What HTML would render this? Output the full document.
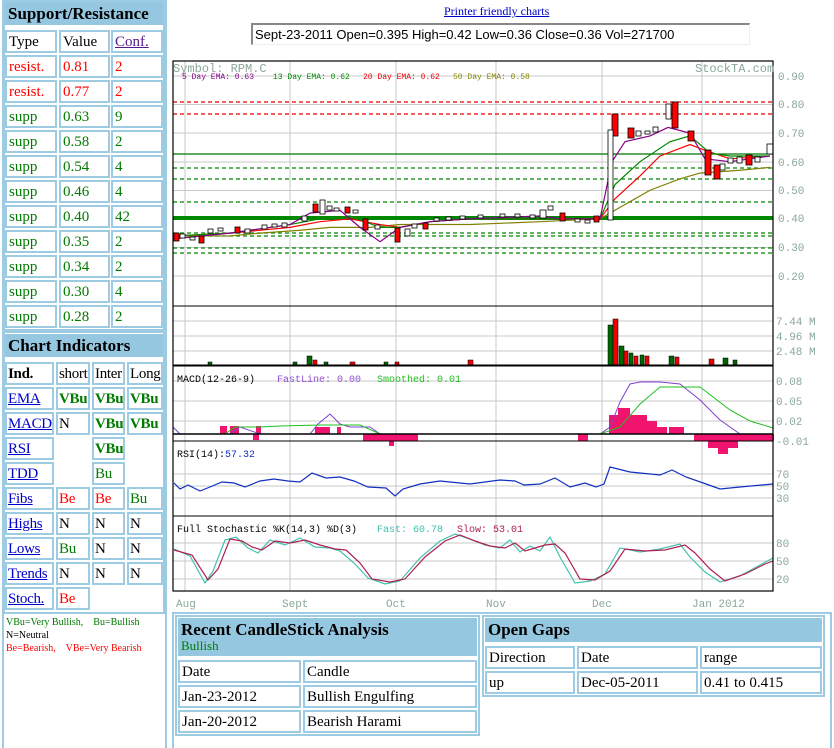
<!DOCTYPE html>
<html><head><meta charset="utf-8"><style>
*{margin:0;padding:0;box-sizing:border-box}
body{width:834px;height:748px;background:#fff;position:relative;overflow:hidden;font-family:"Liberation Serif",serif;font-size:15px;color:#000}
.a{position:absolute}
.c{position:absolute;border:2px solid #9ccbe2;padding:2px 2px;line-height:17px;white-space:nowrap;overflow:hidden}
.n{padding:2px 0 2px 1px;letter-spacing:-0.3px}
.h{position:absolute;background:#96c7e1;font-weight:bold;font-size:17px;padding:2px 3px;line-height:20px}
.r{color:#f00}.g{color:#007a00}.u{color:#00c;text-decoration:underline}.b{font-weight:bold}
.lk{color:#551a8b;text-decoration:underline}
</style></head><body>
<div class="a" style="left:2px;top:0;width:165px;height:748px;border:2px solid #9ccbe2;border-bottom:none"></div>
<div class="a" style="left:3px;top:0;width:162px;height:331px;border:2px solid #9ccbe2"></div>
<div class="h" style="left:5px;top:2px;width:158px;height:23px">Support/Resistance</div>
<div class="c" style="left:5px;top:30px;width:52px;height:23px">Type</div><div class="c" style="left:59px;top:30px;width:51px;height:23px">Value</div><div class="c lk" style="left:111px;top:30px;width:52px;height:23px">Conf.</div>
<div class="c r" style="left:5px;top:55px;width:52px;height:23px">resist.</div><div class="c r" style="left:59px;top:55px;width:51px;height:23px">0.81</div><div class="c r" style="left:111px;top:55px;width:52px;height:23px">2</div>
<div class="c r" style="left:5px;top:80px;width:52px;height:23px">resist.</div><div class="c r" style="left:59px;top:80px;width:51px;height:23px">0.77</div><div class="c r" style="left:111px;top:80px;width:52px;height:23px">2</div>
<div class="c g" style="left:5px;top:105px;width:52px;height:23px">supp</div><div class="c g" style="left:59px;top:105px;width:51px;height:23px">0.63</div><div class="c g" style="left:111px;top:105px;width:52px;height:23px">9</div>
<div class="c g" style="left:5px;top:130px;width:52px;height:23px">supp</div><div class="c g" style="left:59px;top:130px;width:51px;height:23px">0.58</div><div class="c g" style="left:111px;top:130px;width:52px;height:23px">2</div>
<div class="c g" style="left:5px;top:155px;width:52px;height:23px">supp</div><div class="c g" style="left:59px;top:155px;width:51px;height:23px">0.54</div><div class="c g" style="left:111px;top:155px;width:52px;height:23px">4</div>
<div class="c g" style="left:5px;top:180px;width:52px;height:23px">supp</div><div class="c g" style="left:59px;top:180px;width:51px;height:23px">0.46</div><div class="c g" style="left:111px;top:180px;width:52px;height:23px">4</div>
<div class="c g" style="left:5px;top:205px;width:52px;height:23px">supp</div><div class="c g" style="left:59px;top:205px;width:51px;height:23px">0.40</div><div class="c g" style="left:111px;top:205px;width:52px;height:23px">42</div>
<div class="c g" style="left:5px;top:230px;width:52px;height:23px">supp</div><div class="c g" style="left:59px;top:230px;width:51px;height:23px">0.35</div><div class="c g" style="left:111px;top:230px;width:52px;height:23px">2</div>
<div class="c g" style="left:5px;top:255px;width:52px;height:23px">supp</div><div class="c g" style="left:59px;top:255px;width:51px;height:23px">0.34</div><div class="c g" style="left:111px;top:255px;width:52px;height:23px">2</div>
<div class="c g" style="left:5px;top:280px;width:52px;height:23px">supp</div><div class="c g" style="left:59px;top:280px;width:51px;height:23px">0.30</div><div class="c g" style="left:111px;top:280px;width:52px;height:23px">4</div>
<div class="c g" style="left:5px;top:305px;width:52px;height:23px">supp</div><div class="c g" style="left:59px;top:305px;width:51px;height:23px">0.28</div><div class="c g" style="left:111px;top:305px;width:52px;height:23px">2</div>

<div class="a" style="left:3px;top:331px;width:162px;height:283px;border:2px solid #9ccbe2"></div>
<div class="h" style="left:5px;top:334px;width:158px;height:23px">Chart Indicators</div>
<div class="c b n" style="left:5px;top:362px;width:49px;height:23px">Ind.</div><div class="c n" style="left:56px;top:362px;width:34px;height:23px">short</div><div class="c n" style="left:92px;top:362px;width:33px;height:23px">Inter</div><div class="c n" style="left:127px;top:362px;width:36px;height:23px">Long</div>
<div class="c u n" style="left:5px;top:387px;width:49px;height:23px">EMA</div><div class="c g b n" style="left:56px;top:387px;width:34px;height:23px">VBu</div><div class="c g b n" style="left:92px;top:387px;width:33px;height:23px">VBu</div><div class="c g b n" style="left:127px;top:387px;width:36px;height:23px">VBu</div>
<div class="c u n" style="left:5px;top:412px;width:49px;height:23px">MACD</div><div class="c n" style="left:56px;top:412px;width:34px;height:23px">N</div><div class="c g b n" style="left:92px;top:412px;width:33px;height:23px">VBu</div><div class="c g b n" style="left:127px;top:412px;width:36px;height:23px">VBu</div>
<div class="c u n" style="left:5px;top:437px;width:49px;height:23px">RSI</div><div class="c g b n" style="left:92px;top:437px;width:33px;height:23px">VBu</div>
<div class="c u n" style="left:5px;top:462px;width:49px;height:23px">TDD</div><div class="c g n" style="left:92px;top:462px;width:33px;height:23px">Bu</div>
<div class="c u n" style="left:5px;top:487px;width:49px;height:23px">Fibs</div><div class="c r n" style="left:56px;top:487px;width:34px;height:23px">Be</div><div class="c r n" style="left:92px;top:487px;width:33px;height:23px">Be</div><div class="c g n" style="left:127px;top:487px;width:36px;height:23px">Bu</div>
<div class="c u n" style="left:5px;top:512px;width:49px;height:23px">Highs</div><div class="c n" style="left:56px;top:512px;width:34px;height:23px">N</div><div class="c n" style="left:92px;top:512px;width:33px;height:23px">N</div><div class="c n" style="left:127px;top:512px;width:36px;height:23px">N</div>
<div class="c u n" style="left:5px;top:537px;width:49px;height:23px">Lows</div><div class="c g n" style="left:56px;top:537px;width:34px;height:23px">Bu</div><div class="c n" style="left:92px;top:537px;width:33px;height:23px">N</div><div class="c n" style="left:127px;top:537px;width:36px;height:23px">N</div>
<div class="c u n" style="left:5px;top:562px;width:49px;height:23px">Trends</div><div class="c n" style="left:56px;top:562px;width:34px;height:23px">N</div><div class="c n" style="left:92px;top:562px;width:33px;height:23px">N</div><div class="c n" style="left:127px;top:562px;width:36px;height:23px">N</div>
<div class="c u n" style="left:5px;top:587px;width:49px;height:23px">Stoch.</div><div class="c r n" style="left:56px;top:587px;width:34px;height:23px">Be</div>
<div class="a" style="left:6px;top:616px;font-size:10px;line-height:13px;white-space:nowrap"><span class="g">VBu=Very Bullish, &nbsp;&nbsp; Bu=Bullish</span><br>N=Neutral<br><span class="r">Be=Bearish, &nbsp;&nbsp; VBe=Very Bearish</span></div>

<div class="a" style="left:444px;top:4px;font-size:12px;color:#00c;text-decoration:underline">Printer friendly charts</div>
<div class="a" style="left:251px;top:23px;width:499px;height:22px;border-top:2px solid #888;border-left:2px solid #888;border-right:1px solid #eee;border-bottom:1px solid #eee;font-family:'Liberation Sans',sans-serif;font-size:13px;line-height:19px;padding-left:2px">Sept-23-2011 Open=0.395 High=0.42 Low=0.36 Close=0.36 Vol=271700</div>

<svg class="a" style="left:0;top:0" width="834" height="748" font-family="'Liberation Mono',monospace">
<g stroke="#c8c8c8" stroke-width="1">
<line x1="185" y1="61" x2="185" y2="591"/><line x1="290" y1="61" x2="290" y2="591"/><line x1="396" y1="61" x2="396" y2="591"/><line x1="496" y1="61" x2="496" y2="591"/><line x1="602" y1="61" x2="602" y2="591"/><line x1="702" y1="61" x2="702" y2="591"/>
<line x1="173" y1="76" x2="773" y2="76"/><line x1="173" y1="104.5" x2="773" y2="104.5"/><line x1="173" y1="133" x2="773" y2="133"/><line x1="173" y1="162" x2="773" y2="162"/><line x1="173" y1="190.5" x2="773" y2="190.5"/><line x1="173" y1="219" x2="773" y2="219"/><line x1="173" y1="247.5" x2="773" y2="247.5"/><line x1="173" y1="276" x2="773" y2="276"/>
<line x1="173" y1="321" x2="773" y2="321"/><line x1="173" y1="336" x2="773" y2="336"/><line x1="173" y1="351" x2="773" y2="351"/>
<line x1="173" y1="381" x2="773" y2="381"/><line x1="173" y1="401" x2="773" y2="401"/><line x1="173" y1="421" x2="773" y2="421"/>
<line x1="173" y1="474" x2="773" y2="474"/><line x1="173" y1="486" x2="773" y2="486"/><line x1="173" y1="498" x2="773" y2="498"/>
<line x1="173" y1="543" x2="773" y2="543"/><line x1="173" y1="561" x2="773" y2="561"/><line x1="173" y1="579" x2="773" y2="579"/>
</g>
<g stroke-width="1.2" stroke-dasharray="4,3">
<line x1="173" y1="102" x2="773" y2="102" stroke="#e00"/><line x1="173" y1="114" x2="773" y2="114" stroke="#e00"/>
<line x1="173" y1="168" x2="773" y2="168" stroke="#080"/><line x1="173" y1="179" x2="773" y2="179" stroke="#080"/><line x1="173" y1="202" x2="773" y2="202" stroke="#080"/>
<line x1="173" y1="233" x2="773" y2="233" stroke="#080"/><line x1="173" y1="236" x2="773" y2="236" stroke="#080"/><line x1="173" y1="248" x2="773" y2="248" stroke="#080"/><line x1="173" y1="253" x2="773" y2="253" stroke="#080"/>
</g>
<line x1="173" y1="154" x2="773" y2="154" stroke="#070" stroke-width="1.3"/>
<line x1="173" y1="218" x2="773" y2="218" stroke="#080" stroke-width="4"/>
<g transform="matrix(1 0 0 -285.7 0 333.1)" fill="none">
<polyline vector-effect="non-scaling-stroke" stroke="#808000" stroke-width="1.2" points="174,.34 230,.34 260,.35 300,.36 330,.37 370,.37 400,.38 470,.38 540,.39 600,.40 625,.45 650,.50 680,.54 700,.56 740,.57 770,.58"/>
<polyline vector-effect="non-scaling-stroke" stroke="#f00" stroke-width="1.2" points="174,.34 230,.35 290,.37 320,.39 350,.40 380,.38 400,.37 430,.39 470,.40 540,.40 600,.40 615,.47 640,.55 660,.62 690,.66 705,.64 730,.61 770,.62"/>
<polyline vector-effect="non-scaling-stroke" stroke="#080" stroke-width="1.2" points="174,.34 230,.35 290,.38 320,.40 350,.41 380,.37 400,.37 430,.39 470,.40 540,.40 600,.40 615,.52 640,.60 670,.67 690,.69 710,.63 730,.62 770,.62"/>
<polyline vector-effect="non-scaling-stroke" stroke="#808" stroke-width="1.2" points="174,.33 230,.35 290,.38 310,.42 340,.43 360,.37 380,.32 400,.37 430,.39 470,.40 540,.41 560,.40 600,.40 612,.60 625,.67 650,.69 668,.72 690,.70 705,.61 730,.60 770,.62"/>
</g>
<g fill="#fff" stroke="#000" stroke-width="0.8">
<rect x="180" y="234" width="5" height="4"/><rect x="190" y="237" width="5" height="3"/><rect x="208" y="229" width="5" height="4"/><rect x="218" y="228" width="5" height="3"/><rect x="245" y="229" width="5" height="4"/><rect x="262" y="225" width="5" height="4"/><rect x="272" y="224" width="5" height="3"/><rect x="282" y="223" width="5" height="4"/>
<rect x="302" y="216" width="5" height="5"/><rect x="327" y="206" width="5" height="4"/><rect x="334" y="208" width="5" height="3"/><rect x="353" y="210" width="5" height="3"/><rect x="375" y="225" width="5" height="4"/><rect x="405" y="229" width="5" height="7"/><rect x="412" y="224" width="5" height="4"/>
<rect x="434" y="218" width="5" height="3"/><rect x="446" y="217" width="5" height="3"/><rect x="460" y="216" width="5" height="3"/><rect x="478" y="215" width="5" height="3"/><rect x="500" y="214" width="5" height="3"/><rect x="515" y="214" width="5" height="3"/><rect x="530" y="215" width="5" height="3"/><rect x="548" y="206" width="5" height="4"/><rect x="575" y="219" width="5" height="3"/><rect x="585" y="220" width="5" height="3"/>
<rect x="636" y="131" width="5" height="5"/><rect x="645" y="131" width="5" height="3"/><rect x="653" y="127" width="5" height="5"/><rect x="720" y="164" width="5" height="6"/><rect x="728" y="158" width="5" height="5"/><rect x="737" y="157" width="5" height="6"/><rect x="755" y="157" width="5" height="5"/>
</g>
<g fill="#f00" stroke="#000" stroke-width="0.8">
<rect x="174" y="233" width="5" height="8"/><rect x="199" y="236" width="5" height="7"/><rect x="235" y="227" width="5" height="6"/><rect x="313" y="204" width="5" height="8"/><rect x="345" y="207" width="5" height="6"/>
<rect x="363" y="219" width="5" height="11"/><rect x="395" y="228" width="5" height="14"/><rect x="423" y="223" width="5" height="6"/><rect x="560" y="213" width="5" height="8"/><rect x="594" y="216" width="5" height="6"/>
<rect x="612" y="114" width="6" height="22"/><rect x="628" y="128" width="6" height="10"/><rect x="672" y="102" width="6" height="26"/><rect x="688" y="131" width="6" height="10"/><rect x="705" y="150" width="6" height="25"/><rect x="714" y="165" width="6" height="14"/><rect x="746" y="155" width="6" height="10"/>
</g>
<g fill="#fff" stroke="#000" stroke-width="0.8">
<rect x="608" y="130" width="5" height="90"/><rect x="666" y="104" width="5" height="15"/><rect x="767" y="144" width="6" height="10"/><rect x="320" y="200" width="5" height="14"/><rect x="540" y="210" width="6" height="8"/>
</g>
<g fill="#060" stroke="#000" stroke-width="0.5">
<rect x="208" y="362" width="4" height="3"/><rect x="293" y="362" width="4" height="3"/><rect x="307" y="356" width="5" height="9"/><rect x="324" y="362" width="4" height="3"/><rect x="384" y="362" width="4" height="3"/>
<rect x="608" y="325" width="5" height="40"/><rect x="619" y="346" width="5" height="19"/><rect x="629" y="353" width="4" height="12"/><rect x="640" y="355" width="4" height="10"/><rect x="669" y="356" width="5" height="9"/><rect x="723" y="358" width="5" height="7"/><rect x="733" y="360" width="4" height="5"/>
</g>
<g fill="#e00" stroke="#000" stroke-width="0.5">
<rect x="313" y="360" width="4" height="5"/><rect x="350" y="362" width="5" height="3"/><rect x="395" y="362" width="4" height="3"/><rect x="468" y="360" width="5" height="5"/>
<rect x="613" y="319" width="5" height="46"/><rect x="624" y="351" width="4" height="14"/><rect x="634" y="356" width="4" height="9"/><rect x="645" y="356" width="4" height="9"/><rect x="675" y="357" width="4" height="8"/><rect x="709" y="359" width="5" height="6"/>
</g>
<line x1="173" y1="365" x2="773" y2="365" stroke="#000"/>
<g fill="#f0146e">
<rect x="220" y="426" width="7" height="8"/><rect x="230" y="426" width="9" height="8"/><rect x="256" y="426" width="5" height="8"/><rect x="315" y="427" width="15" height="7"/><rect x="337" y="427" width="4" height="7"/><rect x="253" y="434" width="6" height="6"/>
<rect x="363" y="434" width="55" height="7"/><rect x="389" y="440" width="5" height="6"/><rect x="578" y="434" width="10" height="7"/>
<rect x="609" y="415" width="20" height="19"/><rect x="618" y="408" width="12" height="26"/><rect x="629" y="415" width="18" height="19"/><rect x="647" y="421" width="10" height="13"/><rect x="657" y="427" width="10" height="7"/><rect x="669" y="427" width="15" height="7"/>
<rect x="694" y="434" width="80" height="7"/><rect x="708" y="441" width="30" height="7"/><rect x="718" y="446" width="10" height="8"/>
</g>
<polyline fill="none" stroke="#8040d0" points="173,427 180,434 230,434 240,427 260,434 310,434 318,424 330,414 340,424 350,427 370,427 380,434 600,434 610,427 620,402 630,384 640,382 660,382 680,384 700,400 720,420 740,434 773,434"/>
<polyline fill="none" stroke="#20c020" points="173,434 225,434 235,427 260,427 280,426 320,425 360,425 380,434 600,434 620,427 640,404 660,387 700,387 730,410 750,421 773,428"/>
<line x1="173" y1="434" x2="773" y2="434" stroke="#000" stroke-width="1.5"/>
<line x1="173" y1="441" x2="773" y2="441" stroke="#000"/>
<polyline fill="none" stroke="#1030c0" stroke-width="1.2" points="174,483 180,489 188,485 200,491 210,487 222,482 234,483 245,487 260,481 274,479 288,481 300,482 312,473 326,478 340,477 354,481 368,487 386,488 395,496 403,489 420,484 440,481 470,484 500,480 515,481 524,485 540,484 555,478 570,487 585,483 596,487 604,484 610,467 630,472 660,475 672,470 686,477 706,484 720,489 740,487 773,484"/>
<line x1="173" y1="516" x2="773" y2="516" stroke="#000"/>
<polyline fill="none" stroke="#40c0b0" stroke-width="1.2" points="174,549 190,556 205,583 213,571 225,540 236,537 248,548 258,553 270,540 285,545 300,538 315,547 330,548 340,551 355,564 368,578 385,584 400,581 420,558 440,541 455,534 470,539 485,545 500,548 510,540 520,552 530,546 540,551 550,537 560,557 575,583 590,581 605,574 620,548 640,552 660,549 680,544 690,557 705,572 720,582 740,576 760,565 773,558"/>
<polyline fill="none" stroke="#b02050" stroke-width="1.2" points="174,550 192,555 208,580 218,569 230,539 242,541 252,547 262,550 275,541 290,543 305,540 320,545 335,549 346,550 360,563 372,579 390,582 405,579 425,557 445,541 460,535 475,541 490,546 505,548 515,543 525,551 535,548 545,545 555,544 565,553 580,579 595,580 610,571 625,549 645,551 665,550 685,545 695,553 710,569 725,581 745,574 765,564 773,561"/>
<rect x="173" y="61" width="600" height="530" fill="none" stroke="#000" stroke-width="1.2"/>
<line x1="173" y1="306" x2="773" y2="306" stroke="#000"/>
<line x1="173" y1="366" x2="773" y2="366" stroke="#000"/>
<g font-size="11" fill="#8aa898">
<text x="778" y="80">0.90</text><text x="778" y="108">0.80</text><text x="778" y="137">0.70</text><text x="778" y="166">0.60</text><text x="778" y="194">0.50</text><text x="778" y="222">0.40</text><text x="778" y="251">0.30</text><text x="778" y="280">0.20</text>
<text x="776" y="325">7.44 M</text><text x="776" y="340">4.96 M</text><text x="776" y="355">2.48 M</text>
<text x="776" y="385">0.08</text><text x="776" y="405">0.05</text><text x="776" y="425">0.02</text><text x="776" y="445">-0.01</text>
<text x="776" y="478">70</text><text x="776" y="490">50</text><text x="776" y="502">30</text>
<text x="776" y="547">80</text><text x="776" y="565">50</text><text x="776" y="583">20</text>
<text x="176" y="607">Aug</text><text x="282" y="607">Sept</text><text x="386" y="607">Oct</text><text x="486" y="607">Nov</text><text x="592" y="607">Dec</text><text x="692" y="607">Jan 2012</text>
</g>
<text x="173" y="72" font-size="12" fill="#8aa898">Symbol: RPM.C</text>
<text x="695" y="72" font-size="12" fill="#8aa898">StockTA.com</text>
<g font-size="8">
<text x="182" y="79" fill="#808">5 Day EMA: 0.63</text><text x="273" y="79" fill="#080">13 Day EMA: 0.62</text><text x="363" y="79" fill="#e00">20 Day EMA: 0.62</text><text x="453" y="79" fill="#880">50 Day EMA: 0.58</text>
</g>
<g font-size="10">
<text x="177" y="382" fill="#000">MACD(12-26-9)</text><text x="277" y="382" fill="#9050d0">FastLine: 0.00</text><text x="377" y="382" fill="#20c020">Smoothed: 0.01</text>
<text x="177" y="457" fill="#000">RSI(14):<tspan fill="#1030c0">57.32</tspan></text>
<text x="177" y="532" fill="#000">Full Stochastic %K(14,3) %D(3)</text><text x="377" y="532" fill="#40c0b0">Fast: 60.78</text><text x="457" y="532" fill="#b02050">Slow: 53.01</text>
</g>
</svg>

<div class="a" style="left:172px;top:612px;width:660px;height:136px;border:2px solid #9ccbe2;border-bottom:none"></div>
<div class="a" style="left:175px;top:615px;width:305px;height:121px;border:2px solid #9ccbe2"></div>
<div class="h" style="left:178px;top:618px;width:299px;height:38px;line-height:19px">Recent CandleStick Analysis<br><span style="font-weight:normal;font-size:13px;color:#007a00;line-height:14px;display:block">Bullish</span></div>
<div class="c" style="left:178px;top:660px;width:123px;height:23px">Date</div><div class="c" style="left:303px;top:660px;width:174px;height:23px">Candle</div>
<div class="c" style="left:178px;top:685px;width:123px;height:23px">Jan-23-2012</div><div class="c" style="left:303px;top:685px;width:174px;height:23px">Bullish Engulfing</div>
<div class="c" style="left:178px;top:710px;width:123px;height:23px">Jan-20-2012</div><div class="c" style="left:303px;top:710px;width:174px;height:23px">Bearish Harami</div>
<div class="a" style="left:482px;top:615px;width:343px;height:82px;border:2px solid #9ccbe2"></div>
<div class="h" style="left:485px;top:618px;width:337px;height:24px">Open Gaps</div>
<div class="c" style="left:485px;top:646px;width:90px;height:23px">Direction</div><div class="c" style="left:577px;top:646px;width:121px;height:23px">Date</div><div class="c" style="left:700px;top:646px;width:122px;height:23px">range</div>
<div class="c" style="left:485px;top:671px;width:90px;height:23px">up</div><div class="c" style="left:577px;top:671px;width:121px;height:23px">Dec-05-2011</div><div class="c" style="left:700px;top:671px;width:122px;height:23px">0.41 to 0.415</div>
</body></html>
